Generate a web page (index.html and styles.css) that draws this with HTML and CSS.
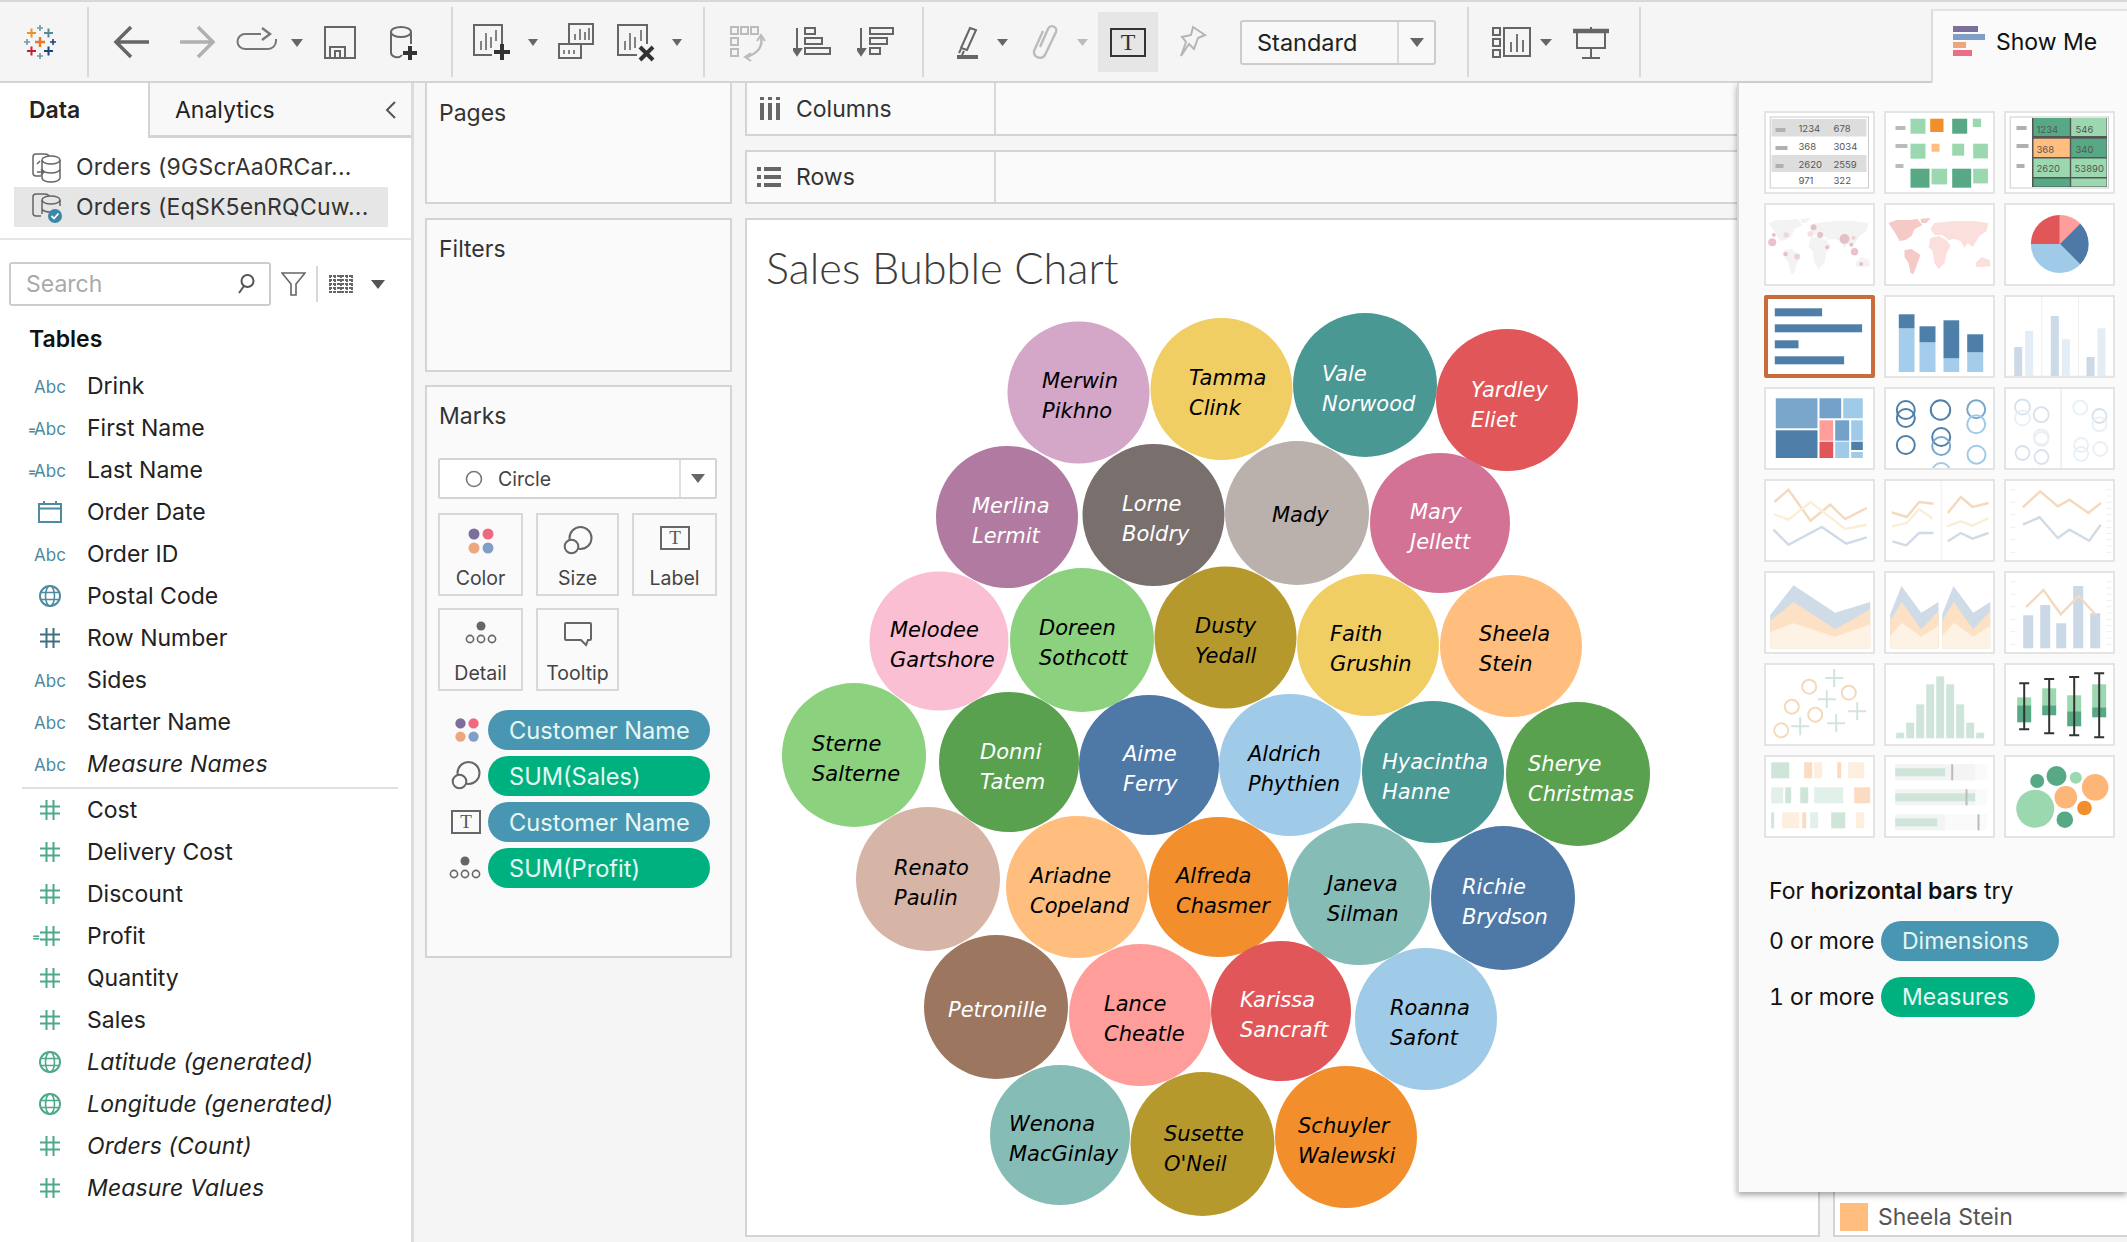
FILE: index.html
```html
<!DOCTYPE html>
<html lang="en">
<head>
<meta charset="utf-8">
<title>Sales Bubble Chart</title>
<link rel="stylesheet" href="styles.css">
</head>
<body>
<svg class="defs" width="0" height="0" aria-hidden="true">
  <defs>
    <symbol id="hash" viewBox="0 0 22 22"><path d="M7.5 1V21M14.5 1V21M1 7.5H21M1 14.5H21" fill="none" stroke="currentColor" stroke-width="2"/></symbol>
    <symbol id="globe" viewBox="0 0 24 24"><circle cx="12" cy="12" r="10" fill="none" stroke="currentColor" stroke-width="2"/><ellipse cx="12" cy="12" rx="4.5" ry="10" fill="none" stroke="currentColor" stroke-width="1.6"/><path d="M2.5 8.5H21.5M2.5 15.5H21.5" fill="none" stroke="currentColor" stroke-width="1.6"/></symbol>
    <symbol id="m-color" viewBox="0 0 30 30"><circle cx="8" cy="8" r="5.5" fill="#7b6f9b"/><circle cx="22" cy="8" r="5.5" fill="#ef6a80"/><circle cx="8" cy="22" r="5.5" fill="#eda77e"/><circle cx="22" cy="22" r="5.5" fill="#7f9fc6"/></symbol>
    <symbol id="m-size" viewBox="0 0 30 30"><circle cx="17.5" cy="12" r="11" fill="none" stroke="#666" stroke-width="2"/><circle cx="8.5" cy="20.5" r="6.8" fill="#fafafa" stroke="#666" stroke-width="2"/></symbol>
    <symbol id="m-label" viewBox="0 0 30 24"><rect x="1" y="1" width="28" height="22" fill="none" stroke="#666" stroke-width="2"/><text x="15" y="18" class="serif-t">T</text></symbol>
    <symbol id="m-detail" viewBox="0 0 32 24"><circle cx="16" cy="5" r="4.5" fill="#666"/><circle cx="5" cy="18" r="3.6" fill="none" stroke="#666" stroke-width="1.6"/><circle cx="16" cy="18" r="3.6" fill="none" stroke="#666" stroke-width="1.6"/><circle cx="27" cy="18" r="3.6" fill="none" stroke="#666" stroke-width="1.6"/></symbol>
    <symbol id="world" viewBox="0 0 110 83"><path d="M4 20 12 17 25 17 33 16 36 20 38 22 30 26 27 33 21 37 15 38 12 32 8 26ZM36 16 46 15 42 20 37 20ZM20 47 27 46 36 52 33 60 29 71 26 70 24 60 20 54Z" class="w-a"/><path d="M46 26 50 20 60 19 72 18 88 18 104 20 102 28 95 33 92 38 88 44 83 40 80 45 76 38 70 36 64 37 58 32 50 32ZM46 35 54 33 62 37 66 43 62 50 60 60 54 66 50 60 48 48 44 44ZM91 60 97 54 105 57 106 63 98 64 92 64Z" class="w-b"/></symbol>
  </defs>
</svg>

<header class="toolbar">
  <div class="tgroup g-logo">
    <svg class="tool t-logo" width="36" height="36" viewBox="0 0 36 36" fill="none" stroke-width="2">
      <path d="M13 18H23M18 13V23" stroke="#e8762b" stroke-width="2.4"/>
      <path d="M5 9H14M9.5 4.500V13.500" stroke="#eb912b"/>
      <path d="M22 9H31M26.500 4.500V13.500" stroke="#5b879b"/>
      <path d="M15 4H21M18 1V7" stroke="#7099a6" stroke-width="1.600"/>
      <path d="M2 18H8M5 15V21" stroke="#7099a6" stroke-width="1.600"/>
      <path d="M28 18H34M31 15V21" stroke="#1f447e" stroke-width="1.600"/>
      <path d="M5 27H14M9.500 22.500V31.500" stroke="#c72035"/>
      <path d="M22 27H31M26.500 22.500V31.500" stroke="#1f447e"/>
      <path d="M15 32H21M18 29V35" stroke="#7099a6" stroke-width="1.600"/>
    </svg>
  </div>
  <div class="tgroup">
    <svg class="tool t-back" width="44" height="44" viewBox="0 0 44 44" fill="none" stroke="#666" stroke-width="3.500"><path d="M39 22H8M21 7 6 22 21 37"/></svg>
    <svg class="tool t-fwd" width="44" height="44" viewBox="0 0 44 44" fill="none" stroke="#b0b0b0" stroke-width="3.500"><path d="M6 22H37M24 7 39 22 24 37"/></svg>
    <svg class="tool t-redo" width="68" height="44" viewBox="0 0 68 44" fill="none" stroke="#777" stroke-width="2"><path d="M25 14H9a7.500 7.500 0 0 0 0 15H32a8 8 0 0 0 8-8V19"/><path d="M26 8 34 14 26 20" stroke-width="2.400"/><path d="M55 19H67L61 27Z" fill="#666" stroke="none"/></svg>
    <svg class="tool t-save" width="36" height="44" viewBox="0 0 36 44" fill="none" stroke="#666" stroke-width="2"><path d="M3 7H33V38H3Z"/><path d="M8 38V27H23V38M13 38V31H18V38"/></svg>
    <svg class="tool t-ds" width="40" height="44" viewBox="0 0 40 44" fill="none" stroke="#666" stroke-width="2"><ellipse cx="17" cy="12" rx="10" ry="5"/><path d="M7 12V32a6 5 0 0 0 11 3M27 12V24"/><path d="M26 26V40M19 33H33" stroke="#333" stroke-width="4"/></svg>
  </div>
  <div class="tgroup">
    <svg class="tool t-new" width="68" height="44" viewBox="0 0 68 44" fill="none" stroke="#666" stroke-width="2"><path d="M30 25V5H2V35H20"/><path d="M9 30V21M14 30V13M19 28V17M24 21V10" stroke-width="1.600"/><path d="M30 24V40M22 32H38" stroke="#333" stroke-width="4"/><path d="M56 19H66L61 26Z" fill="#666" stroke="none"/></svg>
    <svg class="tool t-dup" width="38" height="44" viewBox="0 0 38 44" fill="none" stroke="#666" stroke-width="2"><path d="M12 24V4H36V24H24"/><path d="M18 20V14M23 20V9M28 20V12M32 20V8" stroke-width="1.600"/><path d="M2 24H24V38H2Z"/><path d="M7 34V30M12 34V30M17 34V30" stroke-width="1.600"/></svg>
    <svg class="tool t-clear" width="68" height="44" viewBox="0 0 68 44" fill="none" stroke="#666" stroke-width="2"><path d="M31 24V5H2V35H21"/><path d="M9 30V21M14 30V13M19 28V17M25 21V10" stroke-width="1.600"/><path d="M24 27 37 40M37 27 24 40" stroke="#333" stroke-width="4"/><path d="M56 19H66L61 26Z" fill="#666" stroke="none"/></svg>
  </div>
  <div class="tgroup">
    <svg class="tool t-swap" width="40" height="44" viewBox="0 0 40 44" fill="none" stroke="#bbb" stroke-width="2"><path d="M3 7H10V14H3ZM13 7H20V14H13ZM23 7H30V14H23ZM3 18H10V25H3ZM3 29H10V36H3Z"/><path d="M33 17C35 26 30 33 19 37" stroke-width="2.400"/><path d="M29 21 33 15 37 21M23 33 17 37 23 41" stroke-width="2"/></svg>
    <svg class="tool t-asc" width="38" height="44" viewBox="0 0 38 44" fill="none" stroke="#666" stroke-width="2"><path d="M4 8V33"/><path d="M0 29H8L4 35Z" fill="#666"/><path d="M12 8H22V14H12ZM12 18H29V24H12ZM12 28H37V34H12Z"/></svg>
    <svg class="tool t-desc" width="38" height="44" viewBox="0 0 38 44" fill="none" stroke="#666" stroke-width="2"><path d="M4 8V33"/><path d="M0 29H8L4 35Z" fill="#666"/><path d="M13 8H36V14H13ZM13 18H30V24H13ZM13 28H23V34H13Z"/></svg>
  </div>
  <div class="tgroup">
    <svg class="tool t-pen" width="58" height="44" viewBox="0 0 58 44" fill="none" stroke="#666" stroke-width="2"><path d="M15 8 21 10 12 30 6 28Z"/><path d="M6 29 4 33M9 31 7 35"/><path d="M2 37H23" stroke-width="4"/><path d="M42 19H53L47.500 26Z" fill="#666" stroke="none"/></svg>
    <svg class="tool t-clip" width="62" height="44" viewBox="0 0 62 44" fill="none" stroke="#bbb" stroke-width="2.400"><path d="M10 27 18 9a4 4 0 0 1 8 3L15 35a6 6 0 0 1-11-4L13 11"/><path d="M47 19H58L52.500 26Z" fill="#bbb" stroke="none"/></svg>
    <div class="tool t-text">
      <svg width="36" height="29" viewBox="0 0 36 29"><rect x="1" y="1" width="34" height="27" fill="none" stroke="#333" stroke-width="2"/><text x="18" y="22" class="serif-big">T</text></svg>
    </div>
    <svg class="tool t-pin" width="32" height="44" viewBox="0 0 32 44" fill="none" stroke="#b5b5b5" stroke-width="2"><path d="M17 7 29 15 22 18 18 29 13 24 5 36 10 22 6 17 15 15Z"/></svg>
    <div class="tool select-std"><span class="select-label">Standard</span><span class="select-caret"></span></div>
  </div>
  <div class="tgroup">
    <svg class="tool t-labels" width="66" height="44" viewBox="0 0 66 44" fill="none" stroke="#666" stroke-width="2"><path d="M3 8H10V15H3ZM3 19H10V26H3ZM3 30H10V37H3Z"/><path d="M14 8H40V36H14Z"/><path d="M21 32V22M27 32V14M33 32V20" stroke-width="1.800"/><path d="M50 19H62L56 26Z" fill="#666" stroke="none"/></svg>
    <svg class="tool t-present" width="38" height="44" viewBox="0 0 38 44" fill="none" stroke="#666" stroke-width="2"><path d="M1 11H37" stroke-width="4.500"/><path d="M19 7V10M5 12V28H33V12M19 28V37M10 38H28"/></svg>
  </div>
  <div class="showme-tab">
    <svg width="32" height="32" viewBox="0 0 32 32"><rect y="0" width="25" height="6" fill="#7b6f9b"/><rect y="8" width="32" height="6" fill="#7f9fc6"/><rect y="16" width="13" height="6" fill="#eda77e"/><rect y="24" width="19" height="6" fill="#ea6e85"/></svg>
    <span>Show Me</span>
  </div>
</header>

<main class="workspace">
  <aside class="data-pane">
    <div class="tabs">
      <div class="tab tab-on">Data</div>
      <div class="tab tab-off">Analytics<svg class="chev" width="12" height="20" viewBox="0 0 12 20" fill="none" stroke="#555" stroke-width="2"><path d="M10 2 2 10 10 18"/></svg></div>
    </div>
    <div class="sources">
      <div class="source">
        <svg width="32" height="34" viewBox="0 0 32 34" fill="none" stroke="#666" stroke-width="1.500"><path d="M10 26H5a3 3 0 0 1-3-3V7a3 3 0 0 1 3-3H13a5 2.500 0 0 1 5 2"/><ellipse cx="20" cy="10" rx="9" ry="4"/><path d="M11 10V28a9 4 0 0 0 18 0V10M11 19a9 4 0 0 0 18 0"/><path d="M6 14 9 11M6 22H13M10 19 13 22 10 25"/></svg>
        <span>Orders (9GScrAa0RCar...</span>
      </div>
      <div class="source source-on">
        <svg width="32" height="34" viewBox="0 0 32 34" fill="none" stroke="#666" stroke-width="1.500"><path d="M10 26H5a3 3 0 0 1-3-3V7a3 3 0 0 1 3-3H13a5 2.500 0 0 1 5 2"/><ellipse cx="20" cy="10" rx="9" ry="4"/><path d="M11 10V24M29 10V16M11 19a9 4 0 0 0 9 3"/><circle cx="24" cy="26" r="7" fill="#3b86a9" stroke="none"/><path d="M20.500 26 23 28.500 27.500 23.500" stroke="#fff" stroke-width="1.800"/></svg>
        <span>Orders (EqSK5enRQCuw...</span>
      </div>
    </div>
    <div class="rule"></div>
    <div class="search-row">
      <div class="search"><span>Search</span><svg width="18" height="22" viewBox="0 0 18 22" fill="none" stroke="#555" stroke-width="2"><circle cx="10.500" cy="8" r="6"/><path d="M7 13 2 20"/></svg></div>
      <svg class="funnel" width="25" height="24" viewBox="0 0 25 24" fill="none" stroke="#666" stroke-width="1.600"><path d="M1 1H24L15 12V23H10V12Z"/></svg>
      <span class="search-div"></span>
      <svg class="gridic" width="24" height="18" viewBox="0 0 24 18"><path d="M0 1H24M0 5H24M0 9H24M0 13H24M0 17H24M1 0V18M6 0V18M12 0V18M18 0V18M23 0V18" stroke="#666" stroke-width="2" stroke-dasharray="3 1"/></svg>
      <span class="caret caret-dark"></span>
    </div>
    <h2 class="tables">Tables</h2>
    <ul class="fields">
      <li class="field"><span class="fi dim abc">Abc</span>Drink</li>
      <li class="field"><span class="fi dim abc"><i class="eq">=</i>Abc</span>First Name</li>
      <li class="field"><span class="fi dim abc"><i class="eq">=</i>Abc</span>Last Name</li>
      <li class="field"><span class="fi dim"><svg width="24" height="22" viewBox="0 0 24 22" fill="none" stroke="currentColor" stroke-width="2"><path d="M1 3H23V21H1ZM1 7.500H23M6 0V4M18 0V4"/></svg></span>Order Date</li>
      <li class="field"><span class="fi dim abc">Abc</span>Order ID</li>
      <li class="field"><span class="fi dim"><svg width="24" height="24"><use href="#globe"/></svg></span>Postal Code</li>
      <li class="field"><span class="fi dimdark"><svg width="22" height="22"><use href="#hash"/></svg></span>Row Number</li>
      <li class="field"><span class="fi dim abc">Abc</span>Sides</li>
      <li class="field"><span class="fi dim abc">Abc</span>Starter Name</li>
      <li class="field gen"><span class="fi dim abc">Abc</span>Measure Names</li>
    </ul>
    <div class="rule rule-fields"></div>
    <ul class="fields">
      <li class="field"><span class="fi mea"><svg width="22" height="22"><use href="#hash"/></svg></span>Cost</li>
      <li class="field"><span class="fi mea"><svg width="22" height="22"><use href="#hash"/></svg></span>Delivery Cost</li>
      <li class="field"><span class="fi mea"><svg width="22" height="22"><use href="#hash"/></svg></span>Discount</li>
      <li class="field"><span class="fi mea"><i class="eq eq-num">=</i><svg width="22" height="22"><use href="#hash"/></svg></span>Profit</li>
      <li class="field"><span class="fi mea"><svg width="22" height="22"><use href="#hash"/></svg></span>Quantity</li>
      <li class="field"><span class="fi mea"><svg width="22" height="22"><use href="#hash"/></svg></span>Sales</li>
      <li class="field gen"><span class="fi mea"><svg width="24" height="24"><use href="#globe"/></svg></span>Latitude (generated)</li>
      <li class="field gen"><span class="fi mea"><svg width="24" height="24"><use href="#globe"/></svg></span>Longitude (generated)</li>
      <li class="field gen"><span class="fi mea"><svg width="22" height="22"><use href="#hash"/></svg></span>Orders (Count)</li>
      <li class="field gen"><span class="fi mea"><svg width="22" height="22"><use href="#hash"/></svg></span>Measure Values</li>
    </ul>
  </aside>

  <section class="cards">
    <div class="card card-pages"><h3>Pages</h3></div>
    <div class="card card-filters"><h3>Filters</h3></div>
    <div class="card card-marks">
      <h3>Marks</h3>
      <div class="mark-type">
        <svg width="18" height="18" viewBox="0 0 18 18"><circle cx="9" cy="9" r="7.500" fill="none" stroke="#777" stroke-width="1.600"/></svg>
        <span class="mark-name">Circle</span>
        <span class="mark-drop"><span class="caret"></span></span>
      </div>
      <div class="mark-btns">
        <div class="mbtn"><svg width="30" height="30"><use href="#m-color"/></svg><span>Color</span></div>
        <div class="mbtn"><svg width="30" height="30"><use href="#m-size"/></svg><span>Size</span></div>
        <div class="mbtn"><svg width="30" height="24"><use href="#m-label"/></svg><span>Label</span></div>
        <div class="mbtn"><svg width="32" height="24"><use href="#m-detail"/></svg><span>Detail</span></div>
        <div class="mbtn"><svg width="30" height="26" viewBox="0 0 30 26" fill="none" stroke="#666" stroke-width="2"><path d="M3 2H27a1 1 0 0 1 1 1V18a1 1 0 0 1-1 1H25L23 24 18 19H3a1 1 0 0 1-1-1V3a1 1 0 0 1 1-1Z"/></svg><span>Tooltip</span></div>
      </div>
      <div class="mark-pills">
        <div class="mrow"><svg width="28" height="28"><use href="#m-color"/></svg><span class="pill p-dim">Customer Name</span></div>
        <div class="mrow"><svg width="30" height="30"><use href="#m-size"/></svg><span class="pill p-mea">SUM(Sales)</span></div>
        <div class="mrow"><svg width="30" height="24"><use href="#m-label"/></svg><span class="pill p-dim">Customer Name</span></div>
        <div class="mrow"><svg width="32" height="24"><use href="#m-detail"/></svg><span class="pill p-mea">SUM(Profit)</span></div>
      </div>
    </div>
  </section>

  <section class="view">
    <div class="shelf">
      <div class="shelf-head"><svg width="22" height="24" viewBox="0 0 22 24" fill="#666"><path d="M0 0H4V3H0ZM8 0H12V3H8ZM16 0H20V3H16ZM0 6H4V23H0ZM8 6H12V23H8ZM16 6H20V23H16Z"/></svg><span>Columns</span></div>
    </div>
    <div class="shelf">
      <div class="shelf-head"><svg class="rows-ic" width="24" height="22" viewBox="0 0 24 22" fill="#666"><path d="M0 1H4V5H0ZM7 1H24V5H7ZM0 9H4V13H0ZM7 9H24V13H7ZM0 17H4V21H0ZM7 17H24V21H7Z"/></svg><span>Rows</span></div>
    </div>
    <div class="viz-row">
      <div class="chart">
        <h1 class="chart-title">Sales Bubble Chart</h1>
        <svg class="bubbles" width="1071" height="935" viewBox="747 300 1071 935">
          <g class="bub"><circle cx="1078.500" cy="392.500" r="71" fill="#d4a6c8"/><text x="1042" y="388"><tspan>Merwin</tspan><tspan x="1042" dy="30">Pikhno</tspan></text></g>
          <g class="bub"><circle cx="1221.500" cy="389" r="71" fill="#f1ce63"/><text x="1189" y="385"><tspan>Tamma</tspan><tspan x="1189" dy="30">Clink</tspan></text></g>
          <g class="bub lt"><circle cx="1365" cy="385" r="72" fill="#499894"/><text x="1322" y="381"><tspan>Vale</tspan><tspan x="1322" dy="30">Norwood</tspan></text></g>
          <g class="bub lt"><circle cx="1507" cy="400" r="71" fill="#e15759"/><text x="1471" y="397"><tspan>Yardley</tspan><tspan x="1471" dy="30">Eliet</tspan></text></g>
          <g class="bub lt"><circle cx="1007" cy="517" r="71" fill="#b07aa1"/><text x="972" y="513"><tspan>Merlina</tspan><tspan x="972" dy="30">Lermit</tspan></text></g>
          <g class="bub lt"><circle cx="1153.500" cy="515" r="71" fill="#79706e"/><text x="1122" y="511"><tspan>Lorne</tspan><tspan x="1122" dy="30">Boldry</tspan></text></g>
          <g class="bub"><circle cx="1297" cy="513" r="72" fill="#bab0ac"/><text x="1272" y="522">Mady</text></g>
          <g class="bub lt"><circle cx="1440" cy="523" r="70" fill="#d37295"/><text x="1410" y="519"><tspan>Mary</tspan><tspan x="1410" dy="30">Jellett</tspan></text></g>
          <g class="bub"><circle cx="939" cy="641" r="69.500" fill="#fabfd2"/><text x="890" y="637"><tspan>Melodee</tspan><tspan x="890" dy="30">Gartshore</tspan></text></g>
          <g class="bub"><circle cx="1082" cy="640" r="72" fill="#8cd17d"/><text x="1039" y="635"><tspan>Doreen</tspan><tspan x="1039" dy="30">Sothcott</tspan></text></g>
          <g class="bub"><circle cx="1225.500" cy="637.500" r="71" fill="#b6992d"/><text x="1195" y="633"><tspan>Dusty</tspan><tspan x="1195" dy="30">Yedall</tspan></text></g>
          <g class="bub"><circle cx="1368" cy="645" r="71" fill="#f1ce63"/><text x="1330" y="641"><tspan>Faith</tspan><tspan x="1330" dy="30">Grushin</tspan></text></g>
          <g class="bub"><circle cx="1511" cy="646" r="71" fill="#ffbe7d"/><text x="1479" y="641"><tspan>Sheela</tspan><tspan x="1479" dy="30">Stein</tspan></text></g>
          <g class="bub"><circle cx="854" cy="755" r="72" fill="#8cd17d"/><text x="812" y="751"><tspan>Sterne</tspan><tspan x="812" dy="30">Salterne</tspan></text></g>
          <g class="bub lt"><circle cx="1009" cy="762" r="70" fill="#59a14f"/><text x="980" y="759"><tspan>Donni</tspan><tspan x="980" dy="30">Tatem</tspan></text></g>
          <g class="bub lt"><circle cx="1149" cy="765" r="70" fill="#4e79a7"/><text x="1123" y="761"><tspan>Aime</tspan><tspan x="1123" dy="30">Ferry</tspan></text></g>
          <g class="bub"><circle cx="1290" cy="765" r="71" fill="#a0cbe8"/><text x="1248" y="761"><tspan>Aldrich</tspan><tspan x="1248" dy="30">Phythien</tspan></text></g>
          <g class="bub lt"><circle cx="1433" cy="772" r="71" fill="#499894"/><text x="1382" y="769"><tspan>Hyacintha</tspan><tspan x="1382" dy="30">Hanne</tspan></text></g>
          <g class="bub lt"><circle cx="1578" cy="774" r="72" fill="#59a14f"/><text x="1528" y="771"><tspan>Sherye</tspan><tspan x="1528" dy="30">Christmas</tspan></text></g>
          <g class="bub"><circle cx="928" cy="879" r="72" fill="#d7b5a6"/><text x="894" y="875"><tspan>Renato</tspan><tspan x="894" dy="30">Paulin</tspan></text></g>
          <g class="bub"><circle cx="1077" cy="887" r="71" fill="#ffbe7d"/><text x="1030" y="883"><tspan>Ariadne</tspan><tspan x="1030" dy="30">Copeland</tspan></text></g>
          <g class="bub"><circle cx="1218.500" cy="887" r="70" fill="#f28e2b"/><text x="1176" y="883"><tspan>Alfreda</tspan><tspan x="1176" dy="30">Chasmer</tspan></text></g>
          <g class="bub"><circle cx="1359" cy="894" r="71" fill="#86bcb6"/><text x="1327" y="891"><tspan>Janeva</tspan><tspan x="1327" dy="30">Silman</tspan></text></g>
          <g class="bub lt"><circle cx="1503" cy="898" r="72" fill="#4e79a7"/><text x="1462" y="894"><tspan>Richie</tspan><tspan x="1462" dy="30">Brydson</tspan></text></g>
          <g class="bub lt"><circle cx="996" cy="1007" r="72" fill="#9d7660"/><text x="948" y="1017">Petronille</text></g>
          <g class="bub"><circle cx="1140" cy="1015" r="71" fill="#ff9d9a"/><text x="1104" y="1011"><tspan>Lance</tspan><tspan x="1104" dy="30">Cheatle</tspan></text></g>
          <g class="bub lt"><circle cx="1281" cy="1011" r="70" fill="#e15759"/><text x="1240" y="1007"><tspan>Karissa</tspan><tspan x="1240" dy="30">Sancraft</tspan></text></g>
          <g class="bub"><circle cx="1426" cy="1019" r="71" fill="#a0cbe8"/><text x="1390" y="1015"><tspan>Roanna</tspan><tspan x="1390" dy="30">Safont</tspan></text></g>
          <g class="bub"><circle cx="1060" cy="1135" r="70" fill="#86bcb6"/><text x="1009" y="1131"><tspan>Wenona</tspan><tspan x="1009" dy="30">MacGinlay</tspan></text></g>
          <g class="bub"><circle cx="1202.500" cy="1144" r="72" fill="#b6992d"/><text x="1164" y="1141"><tspan>Susette</tspan><tspan x="1164" dy="30">O'Neil</tspan></text></g>
          <g class="bub"><circle cx="1346" cy="1137" r="71" fill="#f28e2b"/><text x="1298" y="1133"><tspan>Schuyler</tspan><tspan x="1298" dy="30">Walewski</tspan></text></g>
        </svg>
      </div>
      <div class="legend">
        <div class="legend-item"><span class="swatch"></span>Sheela Stein</div>
      </div>
    </div>
  </section>

  <aside class="showme">
    <div class="thumbs">
      <svg class="thumb" viewBox="0 0 110 83">
        <rect x="5.700" y="6" width="98.300" height="71" fill="none" stroke="#ccc" stroke-width="1"/>
        <path d="M7 8H102V25.500H7ZM7 44H102V61H7Z" fill="#ddd"/>
        <path d="M11 17H21V21H11ZM11 35H23V39H11ZM11 53H19V57H11Z" fill="#b0b0b0"/>
        <g class="tnum"><text x="34" y="21">1234</text><text x="69" y="21">678</text><text x="34" y="39">368</text><text x="69" y="39">3034</text><text x="34" y="57">2620</text><text x="69" y="57">2559</text><text x="34" y="73">971</text><text x="69" y="73">322</text></g>
      </svg>
      <svg class="thumb" viewBox="0 0 110 83">
        <path d="M11 15H21V19H11ZM11 33H23V37H11ZM11 53H19V57H11Z" fill="#bbb"/>
        <g fill="#9bd8b0"><rect x="26" y="7.700" width="15" height="15"/><rect x="88.300" y="7.700" width="8.300" height="8.300"/><rect x="26" y="32.700" width="15" height="15"/><rect x="67.700" y="32.700" width="12" height="12"/><rect x="88.700" y="32.700" width="14.700" height="14.700"/><rect x="47" y="57.700" width="15.700" height="15.700"/><rect x="88.700" y="57.700" width="14.700" height="14.700"/></g>
        <g fill="#57a985"><rect x="67.700" y="7.700" width="15" height="15"/><rect x="26" y="57.700" width="19" height="19"/><rect x="67.700" y="57.700" width="19" height="19"/></g>
        <rect x="45.700" y="7.700" width="13.300" height="13.300" fill="#f28e2b"/><rect x="47" y="32.700" width="8" height="8" fill="#ffbe7d"/>
      </svg>
      <svg class="thumb" viewBox="0 0 110 83">
        <rect x="5.700" y="6" width="98.300" height="71" fill="none" stroke="#ccc" stroke-width="1"/>
        <path d="M12 15H22V19H12ZM12 33H24V37H12ZM12 53H20V57H12Z" fill="#b0b0b0"/>
        <rect x="27.500" y="7" width="75" height="69" fill="#555"/>
        <rect x="29" y="7" width="36.300" height="18" fill="#57a985"/><rect x="66.700" y="7" width="35.300" height="18" fill="#9bd8b0"/>
        <rect x="29" y="27.700" width="36.300" height="18.300" fill="#ffbe7d"/><rect x="66.700" y="27.700" width="35.300" height="18.300" fill="#57a985"/>
        <rect x="29" y="47.500" width="36.300" height="18.500" fill="#9bd8b0"/><rect x="66.700" y="47.500" width="35.300" height="18.500" fill="#9bd8b0"/>
        <rect x="29" y="67.500" width="36.300" height="8" fill="#57a985"/><rect x="66.700" y="67.500" width="35.300" height="8" fill="#9bd8b0"/>
        <g class="tnum"><text x="32" y="22">1234</text><text x="71" y="22">546</text><text x="32" y="42">368</text><text x="71" y="42">340</text><text x="32" y="61">2620</text><text x="70" y="61">53890</text></g>
      </svg>

      <svg class="thumb map-gray" viewBox="0 0 110 83"><use href="#world" width="110" height="83"/>
        <g fill="#e4aeb8" opacity=".75"><circle cx="7.700" cy="39.300" r="4"/><circle cx="9.300" cy="32" r="2"/><circle cx="21.700" cy="32" r="2.700" opacity=".5"/><circle cx="49" cy="24.300" r="3"/><circle cx="46" cy="31" r="3" opacity=".5"/><circle cx="55.700" cy="32" r="3"/><circle cx="80" cy="36" r="5"/><circle cx="89" cy="35" r="2" opacity=".6"/><circle cx="86.700" cy="41.700" r="2"/><circle cx="62.700" cy="44.300" r="2"/><circle cx="90" cy="48.700" r="3.700"/><circle cx="21" cy="51" r="2.300"/><circle cx="32.700" cy="53.700" r="3" opacity=".6"/><circle cx="96.700" cy="61" r="2"/></g>
      </svg>
      <svg class="thumb map-pink" viewBox="0 0 110 83"><use href="#world" width="110" height="83"/></svg>
      <svg class="thumb" viewBox="0 0 110 83">
        <path d="M55.300 41H26.300A29 29 0 0 1 55.300 12Z" fill="#e15759"/>
        <path d="M55.300 41V12A29 29 0 0 1 75.700 20.500Z" fill="#ff9d9a"/>
        <path d="M55.300 41 75.700 20.500A29 29 0 0 1 75.700 61.500Z" fill="#4e79a7"/>
        <path d="M55.300 41 75.700 61.500A29 29 0 0 1 26.300 41Z" fill="#a0cbe8"/>
      </svg>

      <svg class="thumb thumb-on" viewBox="0 0 110 83"><g fill="#4e7fa9"><rect x="10.300" y="13.300" width="47.300" height="8"/><rect x="10.300" y="29.300" width="87.300" height="8"/><rect x="10.300" y="45.300" width="23.700" height="8"/><rect x="10.300" y="61.300" width="69.300" height="8"/></g></svg>
      <svg class="thumb" viewBox="0 0 110 83">
        <g fill="#a4cdeb"><rect x="14.300" y="33.300" width="15.700" height="43.700"/><rect x="35" y="47.300" width="16" height="29.700"/><rect x="59" y="63.300" width="15.700" height="13.700"/><rect x="82.700" y="57.300" width="16" height="19.700"/></g>
        <g fill="#4e7fa9"><rect x="14.300" y="19.300" width="15.700" height="14"/><rect x="35" y="31.300" width="16" height="16"/><rect x="59" y="25.300" width="15.700" height="38"/><rect x="82.700" y="39.300" width="16" height="18"/></g>
      </svg>
      <svg class="thumb" viewBox="0 0 110 83">
        <path d="M37.300 2V81M74 2V81M2 81H108" stroke="#eee" stroke-width="1" fill="none"/>
        <g fill="#ccd9e6"><rect x="9.700" y="52" width="8" height="29"/><rect x="46.300" y="21" width="8" height="60"/><rect x="82" y="62" width="8" height="19"/></g>
        <g fill="#e3edf5"><rect x="20.700" y="36" width="8" height="45"/><rect x="57.300" y="44.300" width="8" height="36.700"/><rect x="93" y="33.300" width="8" height="47.700"/></g>
      </svg>

      <svg class="thumb" viewBox="0 0 110 83">
        <rect x="11.300" y="11.300" width="41.700" height="30" fill="#7aa6cb"/><rect x="55" y="11.300" width="21.700" height="20" fill="#73a1c9"/><rect x="78.700" y="11.300" width="19.600" height="20" fill="#a0cbe8"/>
        <rect x="11.300" y="43.300" width="41.700" height="27.700" fill="#4e7fa9"/><rect x="55" y="33.300" width="13.700" height="20.400" fill="#ff9d9a"/><rect x="55" y="54.700" width="13.700" height="16.300" fill="#e15759"/>
        <rect x="70.700" y="33.300" width="14" height="20.400" fill="#73a1c9"/><rect x="70.700" y="54.700" width="14" height="16.300" fill="#a0cbe8"/>
        <rect x="86.700" y="33.300" width="11.600" height="20.400" fill="#a0cbe8"/><rect x="86.700" y="54.700" width="11.600" height="8.300" fill="#4e7fa9"/><rect x="86.700" y="65" width="11.600" height="6" fill="#a0cbe8"/>
      </svg>
      <svg class="thumb" viewBox="0 0 110 83" fill="none" stroke-width="2">
        <g stroke="#4e7fa9"><circle cx="21.300" cy="23" r="9"/><circle cx="21.300" cy="31" r="9"/><circle cx="56" cy="23" r="9.700"/><circle cx="21.300" cy="58" r="9"/><circle cx="56.700" cy="50" r="9"/></g>
        <g stroke="#7aa6cb"><circle cx="91.700" cy="22.300" r="9"/><circle cx="56.700" cy="59" r="9"/><circle cx="92" cy="67.700" r="9" stroke="#a0cbe8"/></g>
        <g stroke="#a0cbe8"><circle cx="91.700" cy="37.300" r="9"/><circle cx="56.700" cy="85" r="9"/></g>
      </svg>
      <svg class="thumb" viewBox="0 0 110 83" fill="none" stroke-width="1.800">
        <path d="M56.700 2V81" stroke="#eee"/>
        <g stroke="#d5e2ee"><circle cx="18" cy="20" r="7.500"/><circle cx="36.700" cy="27.700" r="7.500"/><circle cx="18" cy="66" r="7"/><circle cx="37" cy="70" r="7"/><circle cx="95" cy="29" r="7"/></g>
        <g stroke="#e8f0f6"><circle cx="18" cy="31" r="7.500"/><circle cx="36.700" cy="50" r="7.500"/><circle cx="37" cy="52" r="7"/><circle cx="76.700" cy="58" r="7"/><circle cx="76.700" cy="67" r="7"/><circle cx="95.700" cy="62" r="7"/><circle cx="75.700" cy="20.700" r="7"/><circle cx="95" cy="37.300" r="7"/></g>
      </svg>

      <svg class="thumb" viewBox="0 0 110 83" fill="none" stroke-width="2.400">
        <polyline points="10,23 24,10.700 46,41.700 65.700,25.700 80.700,40 102.300,29" stroke="#f5d9bd"/>
        <polyline points="9,35 24,40.700 46,23 80.700,50 102.300,45.700" stroke="#fbeed9"/>
        <polyline points="9,50.700 24,65.700 57.300,48 81.700,64.700 102.300,58.300" stroke="#cfdbe7"/>
      </svg>
      <svg class="thumb" viewBox="0 0 110 83" fill="none" stroke-width="2.400">
        <path d="M56.700 2V81" stroke="#eee" stroke-width="1"/>
        <g stroke="#f5d9bd"><polyline points="7.300,33.300 22.300,38 34.700,23 49,24.700"/><polyline points="63.300,34 76.300,18 88,28 104,24"/></g>
        <g stroke="#fbeed9"><polyline points="7.300,47.300 22.300,44 34.700,30 48,39.700"/><polyline points="62.300,47.300 76.300,42.300 88,46.700 104,39"/></g>
        <g stroke="#cfdbe7"><polyline points="8,62.300 21.700,66.300 34.700,54 49,54"/><polyline points="63.300,62.300 76.300,54 88,59.700 104,54"/></g>
      </svg>
      <svg class="thumb" viewBox="0 0 110 83" fill="none" stroke-width="2.400">
        <path class="ticks" d="M6 10.700H11M6 23.300H11M6 35.700H11M6 48.300H11M6 60.700H11M6 73.300H11M102 10.700H107M102 17H107M102 23.300H107M102 29.500H107M102 35.700H107M102 42H107M102 48.300H107M102 54.500H107M102 60.700H107M102 67H107M102 73.300H107"/>
        <polyline points="18.300,28.300 35.700,12.300 53.300,27.300 65,20.700 84,34 96.300,24" stroke="#f5d9bd"/>
        <polyline points="18.300,45.700 35,38.300 53.300,59 65,50.700 84.700,61.700 96.300,45.700" stroke="#cfdbe7"/>
      </svg>

      <svg class="thumb" viewBox="0 0 110 83">
        <path d="M5.700 44 29 14.300 70.700 41.700 105.700 31V77.300H5.700Z" fill="#cfdbe7"/>
        <path d="M5.700 50 29 31 70.700 58.300 105.700 38.300V77.300H5.700Z" fill="#fde1c4"/>
        <path d="M5.700 61 29 52.300 70.700 65.700 105.700 53.300V77.300H5.700Z" fill="#fef2e4"/>
      </svg>
      <svg class="thumb" viewBox="0 0 110 83">
        <path d="M5.700 43.300 17 15 36.700 41.700 54 31V77.300H5.700ZM57.700 43.300 69 15 88.700 41.700 105.700 31V77.300H57.700Z" fill="#cfdbe7"/>
        <path d="M5.700 50 17.300 31 36.700 58.300 54 40V77.300H5.700ZM57.700 50 69.300 31 88.700 58.300 105.700 40V77.300H57.700Z" fill="#fde1c4"/>
        <path d="M5.700 65 17.300 51.700 36.700 65.700 54 55V77.300H5.700ZM57.700 65 69.300 51.700 88.700 65.700 105.700 55V77.300H57.700Z" fill="#fef2e4"/>
      </svg>
      <svg class="thumb" viewBox="0 0 110 83" fill="none">
        <path class="ticks" d="M6 10.700H11M6 23.300H11M6 35.700H11M6 48.300H11M6 60.700H11M6 73.300H11M102 10.700H107M102 17H107M102 23.300H107M102 29.500H107M102 35.700H107M102 42H107M102 48.300H107M102 54.500H107M102 60.700H107M102 67H107M102 73.300H107"/>
        <g fill="#cbd9e6"><rect x="18.700" y="44.300" width="10" height="33"/><rect x="35.700" y="34" width="10" height="43.300"/><rect x="51.700" y="52.300" width="10" height="25"/><rect x="68.700" y="15" width="10" height="62.300"/><rect x="85.700" y="42.300" width="10" height="35"/></g>
        <polyline points="21.700,36 39,19 56.300,43.300 74,25 90.700,43.300" stroke="#f5d9bd" stroke-width="2.400"/>
      </svg>

      <svg class="thumb" viewBox="0 0 110 83" fill="none" stroke-width="2">
        <g stroke="#f5d9bd"><circle cx="44.700" cy="23.700" r="7"/><circle cx="84.300" cy="29.700" r="7"/><circle cx="27.300" cy="43.700" r="7"/><circle cx="50.700" cy="51.700" r="7"/><circle cx="16.700" cy="67.300" r="7"/></g>
        <path d="M60.700 15H78.700M69.700 6V24M53.300 36.300H71.300M62.300 27.300V45.300M83.700 48.300H101.700M92.700 39.300V57.300M62.700 60.300H80.700M71.700 51.300V69.300M26.700 63.300H44.700M35.700 54.300V72.300" stroke="#d2e5dd"/>
      </svg>
      <svg class="thumb" viewBox="0 0 110 83"><g fill="#cfe5da"><rect x="11.700" y="69.700" width="8" height="5.600"/><rect x="21.700" y="59.700" width="8" height="15.600"/><rect x="31.700" y="41.300" width="8" height="34"/><rect x="41.700" y="21.300" width="8" height="54"/><rect x="51.700" y="13.300" width="8" height="62"/><rect x="61.700" y="21.300" width="8" height="54"/><rect x="71.700" y="41.300" width="8" height="34"/><rect x="81.700" y="59.700" width="8" height="15.600"/><rect x="91.700" y="69.700" width="8" height="5.600"/></g></svg>
      <svg class="thumb" viewBox="0 0 110 83">
        <g fill="#9bd8b0"><rect x="12.700" y="34.300" width="14" height="8"/><rect x="37.700" y="25.300" width="14" height="17"/><rect x="62.700" y="32.300" width="14" height="16"/><rect x="87.700" y="21.300" width="14" height="23"/></g>
        <g fill="#57a985"><rect x="12.700" y="42.300" width="14" height="17"/><rect x="37.700" y="42.300" width="14" height="10"/><rect x="62.700" y="48.300" width="14" height="15"/><rect x="87.700" y="44.300" width="14" height="10"/></g>
        <path d="M19.700 20.300V66.300M14.700 20.300H24.700M14.700 66.300H24.700M44.700 16V70.300M39.700 16H49.700M39.700 70.300H49.700M69.700 14V72.300M64.700 14H74.700M64.700 72.300H74.700M94.700 10.300V74.300M89.700 10.300H99.700M89.700 74.300H99.700" fill="none" stroke="#333" stroke-width="2"/>
      </svg>

      <svg class="thumb" viewBox="0 0 110 83">
        <g fill="#cfe5da"><rect x="6.700" y="7.300" width="18" height="16"/><rect x="20.700" y="32.300" width="6" height="16"/><rect x="35.700" y="32.300" width="8" height="16"/><rect x="6.700" y="57.300" width="3" height="16"/><rect x="66.700" y="57.300" width="14" height="16"/></g>
        <g fill="#fbdcc1"><rect x="39.700" y="7.300" width="8" height="16"/><rect x="72.700" y="7.300" width="4" height="16"/><rect x="89.700" y="32.300" width="16" height="16"/><rect x="37.700" y="57.300" width="4" height="16"/></g>
        <g fill="#fdeedd"><rect x="49.700" y="7.300" width="8" height="16"/><rect x="83.700" y="7.300" width="16" height="16"/><rect x="17.700" y="57.300" width="17" height="16"/><rect x="91.700" y="57.300" width="8" height="16"/></g>
        <g fill="#e1f0e9"><rect x="6.700" y="32.300" width="12" height="16"/><rect x="49.700" y="32.300" width="29" height="16"/><rect x="45.700" y="57.300" width="8" height="16"/></g>
      </svg>
      <svg class="thumb" viewBox="0 0 110 83">
        <g fill="#fafafa"><rect x="10.700" y="9.300" width="92" height="16"/><rect x="10.700" y="34.300" width="92" height="16"/><rect x="10.700" y="59.300" width="92" height="16"/></g>
        <g fill="#f4f4f4"><rect x="10.700" y="9.300" width="80" height="16"/><rect x="10.700" y="34.300" width="80" height="16"/><rect x="10.700" y="59.300" width="50" height="16"/></g>
        <g fill="#cfe5da"><rect x="10.700" y="13.300" width="50" height="8"/><rect x="10.700" y="38.300" width="80" height="8"/><rect x="10.700" y="63.300" width="42" height="8"/></g>
        <g fill="#bbb"><rect x="66.700" y="9.300" width="2" height="16"/><rect x="81" y="34.300" width="2" height="16"/><rect x="93" y="59.300" width="2" height="16"/></g>
      </svg>
      <svg class="thumb" viewBox="0 0 110 83">
        <circle cx="30.700" cy="53.700" r="19" fill="#9bd8b0"/><circle cx="32.700" cy="26" r="7" fill="#57a985"/><circle cx="52" cy="21" r="10" fill="#57a985"/><circle cx="71.300" cy="22.700" r="6" fill="#9bd8b0"/><circle cx="90.700" cy="32.300" r="13.300" fill="#fdb578"/><circle cx="61.300" cy="42.300" r="11.300" fill="#fdb578"/><circle cx="80" cy="53" r="7.300" fill="#f28e2b"/><circle cx="60.300" cy="64.700" r="8.300" fill="#57a985"/>
      </svg>
    </div>
    <p class="hint">For <b>horizontal bars</b> try</p>
    <div class="need"><span class="need-label">0 or more</span><span class="pill p-dim need-dim">Dimensions</span></div>
    <div class="need"><span class="need-label">1 or more</span><span class="pill p-mea need-mea">Measures</span></div>
  </aside>
</main>
</body>
</html>
```
FILE: styles.css
```css
* { box-sizing: border-box; }
html, body { margin: 0; padding: 0; }
body {
  position: relative;
  width: 2127px;
  height: 1242px;
  overflow: hidden;
  background: #f5f5f5;
  font-family: Inter, "Noto Sans", sans-serif;
  font-size: 23px;
  color: #222;
}
.defs { position: absolute; }
ul { list-style: none; margin: 0; padding: 0; }
h1, h2, h3, p { margin: 0; }
.serif-t { font: 19px "Liberation Serif", serif; fill: #555; text-anchor: middle; }
.serif-big { font: 24px "Liberation Serif", serif; fill: #333; text-anchor: middle; }

/* Toolbar */
.toolbar {
  display: flex;
  height: 83px;
  border-top: 2px solid #d8d8d8;
  border-bottom: 2px solid #d4d4d4;
  background: #f5f5f5;
}
.tgroup {
  display: flex;
  align-items: center;
  height: 70px;
  margin-top: 5px;
  border-right: 2px solid #d8d8d8;
}
.tool { display: block; flex: none; }
.g-logo { width: 89px; }
.t-logo { margin-left: 22px; }
.t-back { margin-left: 21px; }
.t-fwd { margin-left: 20px; }
.t-redo { margin-left: 18px; }
.t-save { margin-left: 18px; }
.t-ds { margin-left: 26px; margin-right: 27px; }
.t-new { margin-left: 19px; }
.t-dup { margin-left: 17px; }
.t-clear { margin-left: 21px; margin-right: 19px; }
.t-swap { margin-left: 23px; }
.t-asc { margin-left: 25px; }
.t-desc { margin-left: 26px; margin-right: 27px; }
.t-pen { margin-left: 31px; }
.t-clip { margin-left: 17px; }
.t-text {
  display: flex;
  align-items: center;
  justify-content: center;
  width: 60px;
  height: 60px;
  margin-left: 6px;
  background: #e6e6e6;
}
.t-pin { margin-left: 18px; }
.select-std {
  display: flex;
  align-items: center;
  justify-content: space-between;
  width: 196px;
  height: 45px;
  margin-left: 32px;
  margin-right: 31px;
  padding-left: 15px;
  border: 2px solid #ccc;
  border-radius: 3px;
  background: #f8f8f8;
  font-size: 23.500px;
}
.select-caret {
  display: flex;
  align-items: center;
  justify-content: center;
  width: 37px;
  height: 100%;
  border-left: 2px solid #d8d8d8;
}
.select-caret::after,
.caret {
  content: "";
  display: block;
  width: 0;
  height: 0;
  border-left: 7px solid transparent;
  border-right: 7px solid transparent;
  border-top: 9px solid #666;
}
.caret-dark { border-top-color: #555; }
.t-labels { margin-left: 21px; }
.t-present { margin-left: 16px; margin-right: 29px; }
.showme-tab {
  display: flex;
  align-items: center;
  gap: 11px;
  position: relative;
  z-index: 3;
  width: 196px;
  height: 74px;
  margin-top: 7px;
  margin-left: auto;
  padding: 0 0 10px 20px;
  border-top: 2px solid #e2e2e2;
  border-left: 2px solid #dcdcdc;
  background: #fafafa;
  font-size: 23px;
  color: #111;
}

/* Layout */
.workspace { display: flex; height: 1159px; }

/* Data pane */
.data-pane {
  flex: none;
  width: 414px;
  border-right: 3px solid #dcdcdc;
  background: #fff;
}
.tabs { display: flex; height: 55px; }
.tab { display: flex; align-items: center; height: 55px; }
.tab-on { width: 148px; padding: 0 0 2px 29px; font-weight: 600; background: #fff; color: #222; }
.tab-off {
  flex: 1;
  justify-content: space-between;
  padding: 2px 14px 0 25px;
  border-left: 2px solid #d4d4d4;
  border-bottom: 3px solid #d4d4d4;
  background: #f8f8f8;
}
.sources { padding-top: 9px; margin-left: 14px; width: 374px; }
.source { display: flex; align-items: center; gap: 13px; height: 40px; padding-left: 17px; white-space: nowrap; color: #333; letter-spacing: .2px; }
.source svg { flex: none; }
.source-on { background: #e6e6e6; }
.rule { height: 2px; margin-top: 11px; background: #e6e6e6; }
.search-row { display: flex; align-items: center; height: 44px; margin: 22px 0 0 9px; }
.search {
  display: flex;
  align-items: center;
  justify-content: space-between;
  width: 262px;
  height: 44px;
  padding: 0 14px 0 15px;
  border: 2px solid #ccc;
  border-radius: 3px;
  background: #fff;
  color: #aaa;
}
.funnel { margin-left: 10px; }
.search-div { width: 2px; height: 36px; margin-left: 10px; background: #d8d8d8; }
.gridic { margin-left: 11px; }
.search-row .caret { margin-left: 18px; }
.tables { height: 28px; margin: 19px 0 12px 29px; font-size: 23px; font-weight: 600; line-height: 28px; color: #111; }
.field { display: flex; align-items: center; height: 42px; white-space: nowrap; color: #222; }
.gen { font-style: italic; letter-spacing: .15px; }
.fi {
  display: flex;
  align-items: center;
  justify-content: center;
  position: relative;
  flex: none;
  width: 60px;
  margin: 0 7px 0 20px;
  font-style: normal;
  letter-spacing: 0;
}
.abc { font-size: 17px; margin-top: 2px; }
.dim { color: #4f8aa0; }
.dimdark { color: #3f6f82; }
.mea { color: #4ea98a; }
.eq { position: absolute; left: 8px; font-style: normal; font-size: 12px; font-weight: 700; }
.eq-num { left: 12px; }
.rule-fields { width: 376px; margin: 2px 0 0 22px; background: #e0e0e0; }

/* Cards column */
.cards { flex: none; width: 307px; margin: 0 13px 0 11px; display: flex; flex-direction: column; gap: 14px; }
.card { border: 2px solid #d4d4d4; background: #fafafa; padding: 15px 13px 0 11px; }
.card h3 { margin-left: 1px; font-size: 23px; font-weight: 400; line-height: 28px; color: #333; }
.card-pages { height: 121px; border-top: 0; padding-top: 16px; }
.card-filters { height: 154px; }
.card-marks { height: 573px; margin-top: -1px; }
.mark-type {
  display: flex;
  align-items: center;
  height: 41px;
  margin-top: 28px;
  padding-left: 25px;
  border: 2px solid #d4d4d4;
  border-radius: 2px;
  background: #fff;
}
.mark-name { margin-left: 15px; flex: 1; font-size: 19.500px; color: #444; }
.mark-drop { display: flex; align-items: center; justify-content: center; width: 36px; height: 100%; border-left: 2px solid #e0e0e0; }
.mark-btns { display: grid; grid-template-columns: 85px 83px 85px; grid-auto-rows: 83px; gap: 12px 13px; margin-top: 14px; }
.mbtn {
  display: flex;
  flex-direction: column;
  align-items: center;
  justify-content: space-between;
  padding: 11px 0 4px;
  border: 2px solid #d8d8d8;
  background: #fafafa;
  font-size: 19.500px;
  color: #444;
}
.mark-pills { display: flex; flex-direction: column; gap: 6px; margin-top: 19px; }
.mrow { display: grid; grid-template-columns: 50px 222px; align-items: center; }
.mrow svg { justify-self: end; margin-right: 7px; }
.pill {
  display: flex;
  align-items: center;
  height: 40px;
  padding-left: 21px;
  border-radius: 20px;
  font-size: 23.600px;
  color: #e6f7f4;
  white-space: nowrap;
}
.p-dim { background: #4996b2; }
.p-mea { background: #00b180; }

/* View */
.view { flex: 1; min-width: 0; display: flex; flex-direction: column; gap: 14px; padding-bottom: 5px; }
.shelf { height: 53px; border: 2px solid #d4d4d4; border-right: 0; background: #fafafa; flex: none; }
.shelf:first-child { border-top: 0; }
.shelf + .shelf { height: 54px; }
.shelf-head {
  display: flex;
  align-items: center;
  gap: 14px;
  width: 249px;
  height: 100%;
  padding-left: 13px;
  border-right: 2px solid #d8d8d8;
  color: #333;
}
.rows-ic { margin-left: -3px; margin-right: 1px; }
.viz-row { flex: 1; display: flex; gap: 13px; min-height: 0; }
.chart { flex: none; width: 1075px; border: 2px solid #d4d4d4; background: #fff; overflow: hidden; }
.chart-title { height: 80px; padding: 22px 0 0 19px; font-family: Lato, sans-serif; font-size: 43.300px; font-weight: 300; line-height: 50px; color: #3c3c3c; }
.bubbles { display: block; }
.bub text { font: italic 21px "DejaVu Sans", sans-serif; fill: #000; }
.bub.lt text { fill: #fff; }
.legend { flex: 1; display: flex; flex-direction: column; justify-content: flex-end; border: 2px solid #d4d4d4; border-right: 0; background: #fff; }
.legend-item { display: flex; align-items: center; gap: 10px; height: 34px; margin-bottom: 1px; padding-left: 5px; font-size: 23px; color: #555; }
.swatch { width: 28px; height: 28px; background: #ffbe7d; }

/* Show Me */
.showme {
  position: absolute;
  left: 1737px;
  top: 83px;
  z-index: 2;
  width: 390px;
  height: 1109px;
  padding: 28px 0 0 25px;
  border-left: 2px solid #d8d8d8;
  background: #fafafa;
  box-shadow: 0 3px 6px rgba(0, 0, 0, .35);
}
.thumbs { display: grid; grid-template-columns: repeat(3, 111px); grid-auto-rows: 83px; gap: 9px; }
.thumb {
  display: block;
  width: 111px;
  height: 83px;
  background: #fff;
  outline: 2px solid #e4e4e4;
  outline-offset: -2px;
  overflow: hidden;
}
.thumb-on { outline: 4px solid #c96b3c; outline-offset: -4px; border-radius: 2px; }
.tnum text { font: 9.500px Inter, sans-serif; fill: #555; }
.ticks { stroke: #eee; stroke-width: 1; fill: none; }
.w-a { fill: var(--land-a); }
.w-b { fill: var(--land-b); }
.map-gray { --land-a: #f3f3f3; --land-b: #f3f3f3; }
.map-pink { --land-a: #f5c9c6; --land-b: #fbdfdd; }
.hint { margin-top: 38px; margin-left: 5px; font-size: 23px; line-height: 30px; color: #111; }
.hint b { font-weight: 600; }
.need { display: flex; align-items: center; margin: 15px 0 0 5px; color: #111; font-variant-numeric: tabular-nums; }
.need + .need { margin-top: 16px; }
.need-label { width: 112px; flex: none; }
.need-dim { width: 178px; font-size: 23px; }
.need-mea { width: 154px; font-size: 23px; }
```
